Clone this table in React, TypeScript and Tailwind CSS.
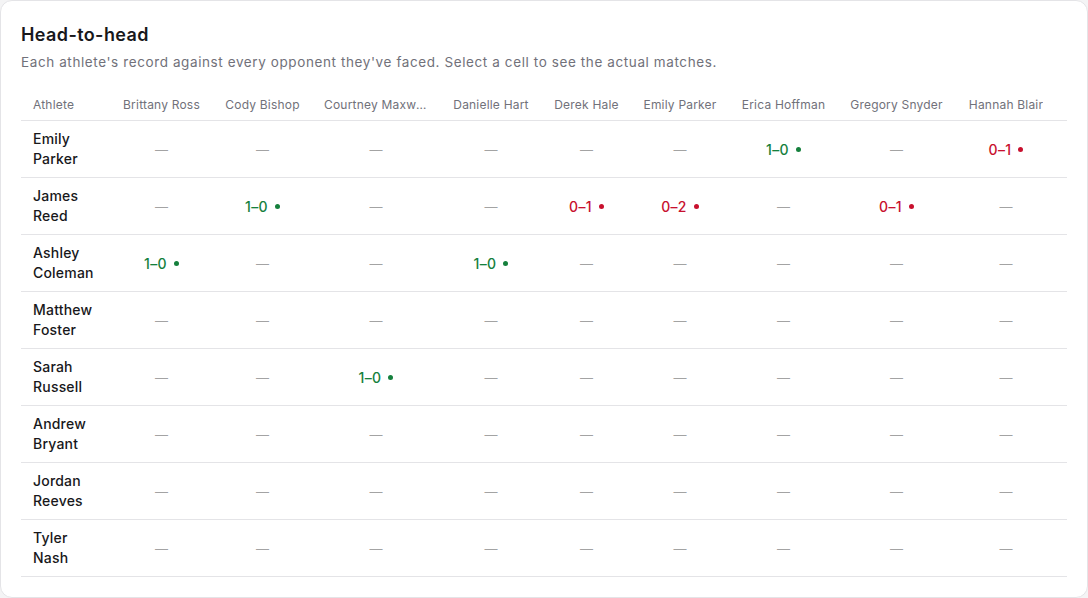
const opponents = [
  { name: "Brittany Ross", w: "w-[103px]" },
  { name: "Cody Bishop", w: "w-[99px]" },
  { name: "Courtney Maxwell", w: "w-[128px]" },
  { name: "Danielle Hart", w: "w-[102px]" },
  { name: "Derek Hale", w: "w-[89px]" },
  { name: "Emily Parker", w: "w-[98px]" },
  { name: "Erica Hoffman", w: "w-[109px]" },
  { name: "Gregory Snyder", w: "w-[117px]" },
  { name: "Hannah Blair", w: "w-[112px]" },
];

type Rec = { w: number; l: number };

const athletes: { name: string; records: Record<string, Rec> }[] = [
  { name: "Emily Parker", records: { "Erica Hoffman": { w: 1, l: 0 }, "Hannah Blair": { w: 0, l: 1 } } },
  {
    name: "James Reed",
    records: {
      "Cody Bishop": { w: 1, l: 0 },
      "Derek Hale": { w: 0, l: 1 },
      "Emily Parker": { w: 0, l: 2 },
      "Gregory Snyder": { w: 0, l: 1 },
    },
  },
  { name: "Ashley Coleman", records: { "Brittany Ross": { w: 1, l: 0 }, "Danielle Hart": { w: 1, l: 0 } } },
  { name: "Matthew Foster", records: {} },
  { name: "Sarah Russell", records: { "Courtney Maxwell": { w: 1, l: 0 } } },
  { name: "Andrew Bryant", records: {} },
  { name: "Jordan Reeves", records: {} },
  { name: "Tyler Nash", records: {} },
];

function Cell({ rec }: { rec?: Rec }) {
  if (!rec) return <span className="text-[13px] text-[#a3a3a3]">—</span>;
  const win = rec.w > rec.l;
  return (
    <button
      className={`inline-flex items-center gap-[7px] text-[14px] font-medium tracking-[0.3px] ${
        win ? "text-[#15803d]" : "text-[#c8102e]"
      }`}
    >
      {rec.w}–{rec.l}
      <span className={`w-[5px] h-[5px] rounded-full ${win ? "bg-[#15803d]" : "bg-[#c8102e]"}`} />
    </button>
  );
}

export default function App() {
  return (
    <div className="bg-[#f4f4f5]" style={{ fontFamily: "Inter, 'Noto Sans', sans-serif" }}>
      <section className="rounded-xl border border-[#e4e4e7] bg-white p-5">
        <h2 className="text-[18px] leading-7 font-semibold tracking-[0.4px] text-[#18181b]">Head-to-head</h2>
        <p className="mt-[3px] text-[13.5px] leading-5 tracking-[0.6px] text-[#71717a]">
          Each athlete's record against every opponent they've faced. Select a cell to see the actual matches.
        </p>
        <table className="mt-3 w-full table-fixed border-collapse">
          <thead>
            <tr className="border-b border-[#e4e4e7]">
              <th className="w-[89px] px-3 pt-[13px] pb-[7px] text-left text-xs font-normal tracking-[0.2px] text-[#71717a]">
                Athlete
              </th>
              {opponents.map((o, i) => (
                <th
                  key={o.name}
                  className={`${o.w} px-3 pt-[13px] pb-[7px] text-xs font-normal tracking-[0.2px] text-[#71717a] ${
                    i === opponents.length - 1 ? "pr-[22px]" : ""
                  }`}
                >
                  <div className="flex justify-center whitespace-nowrap">
                    <span className="max-w-[104px] truncate">{o.name}</span>
                  </div>
                </th>
              ))}
            </tr>
          </thead>
          <tbody>
            {athletes.map((a) => (
              <tr key={a.name} className="border-b border-[#e4e4e7]">
                <td className="px-3 py-2 text-sm leading-5 font-medium tracking-[0.2px] text-[#18181b]">{a.name}</td>
                {opponents.map((o, i) => (
                  <td
                    key={o.name}
                    className={`px-3 py-2 text-center ${i === opponents.length - 1 ? "pr-[22px]" : ""}`}
                  >
                    <Cell rec={a.records[o.name]} />
                  </td>
                ))}
              </tr>
            ))}
          </tbody>
        </table>
      </section>
    </div>
  );
}
